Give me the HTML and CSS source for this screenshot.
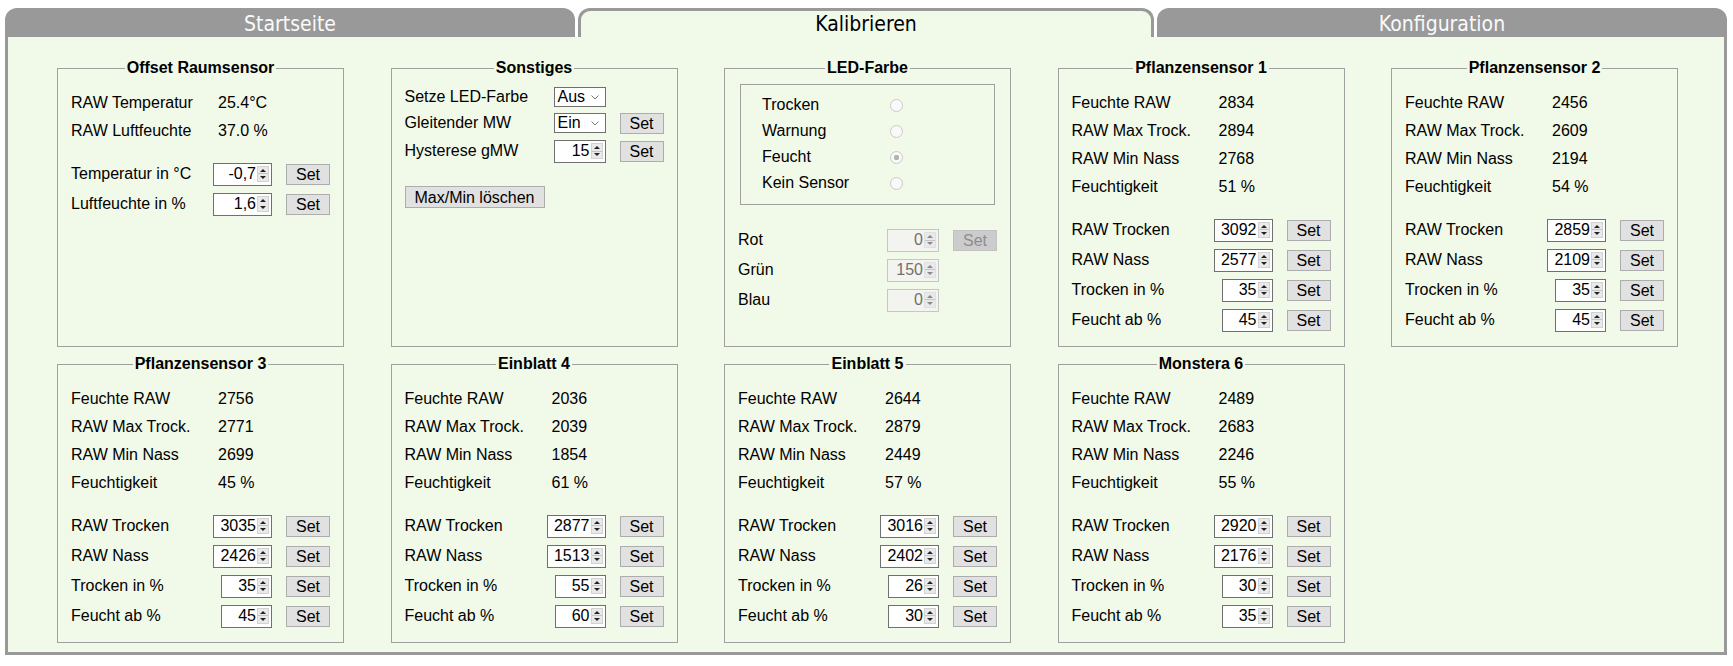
FILE: index.html
```html
<!DOCTYPE html>
<html lang="de">
<head>
<meta charset="utf-8">
<title>Kalibrieren</title>
<link rel="stylesheet" href="styles.css">
</head>
<body>
<div class="app">
  <nav class="tabs">
    <a class="tab" href="#">Startseite</a>
    <a class="tab active" href="#">Kalibrieren</a>
    <a class="tab" href="#">Konfiguration</a>
  </nav>
  <main class="panel">
    <div class="grid">

      <fieldset class="box">
        <legend>Offset Raumsensor</legend>
        <div class="form">
          <div class="row"><span>RAW Temperatur</span><span class="val">25.4°C</span></div>
          <div class="row"><span>RAW Luftfeuchte</span><span class="val">37.0 %</span></div>
          <div class="row ctl sp"><span>Temperatur in °C</span><span class="num w59">-0,7<i class="spin"></i></span><button class="btn">Set</button></div>
          <div class="row ctl"><span>Luftfeuchte in %</span><span class="num w59">1,6<i class="spin"></i></span><button class="btn">Set</button></div>
        </div>
      </fieldset>

      <fieldset class="box">
        <legend>Sonstiges</legend>
        <div class="form so">
          <div class="row s26"><span>Setze LED-Farbe</span><span class="sel">Aus<svg viewBox="0 0 8 5"><path d="M0.5 0.5L4 4L7.5 0.5" fill="none" stroke="#7a7a7a"/></svg></span></div>
          <div class="row s26"><span>Gleitender MW</span><span class="sel">Ein<svg viewBox="0 0 8 5"><path d="M0.5 0.5L4 4L7.5 0.5" fill="none" stroke="#7a7a7a"/></svg></span><button class="btn">Set</button></div>
          <div class="row ctl"><span>Hysterese gMW</span><span class="num w52">15<i class="spin"></i></span><button class="btn">Set</button></div>
          <button class="btn wide">Max/Min löschen</button>
        </div>
      </fieldset>

      <fieldset class="box">
        <legend>LED-Farbe</legend>
        <fieldset class="led">
          <label class="rrow"><span>Trocken</span><input class="radio" type="radio" name="led" disabled></label>
          <label class="rrow"><span>Warnung</span><input class="radio" type="radio" name="led" disabled></label>
          <label class="rrow"><span>Feucht</span><input class="radio" type="radio" name="led" checked disabled></label>
          <label class="rrow"><span>Kein Sensor</span><input class="radio" type="radio" name="led" disabled></label>
        </fieldset>
        <div class="rgb">
          <div class="row ctl"><span>Rot</span><span class="num w52 off">0<i class="spin"></i></span><button class="btn" disabled>Set</button></div>
          <div class="row ctl"><span>Grün</span><span class="num w52 off">150<i class="spin"></i></span></div>
          <div class="row ctl"><span>Blau</span><span class="num w52 off">0<i class="spin"></i></span></div>
        </div>
      </fieldset>

      <fieldset class="box">
        <legend>Pflanzensensor 1</legend>
        <div class="form">
          <div class="row"><span>Feuchte RAW</span><span class="val">2834</span></div>
          <div class="row"><span>RAW Max Trock.</span><span class="val">2894</span></div>
          <div class="row"><span>RAW Min Nass</span><span class="val">2768</span></div>
          <div class="row"><span>Feuchtigkeit</span><span class="val">51 %</span></div>
          <div class="row ctl sp"><span>RAW Trocken</span><span class="num w59">3092<i class="spin"></i></span><button class="btn">Set</button></div>
          <div class="row ctl"><span>RAW Nass</span><span class="num w59">2577<i class="spin"></i></span><button class="btn">Set</button></div>
          <div class="row ctl"><span>Trocken in %</span><span class="num w51">35<i class="spin"></i></span><button class="btn">Set</button></div>
          <div class="row ctl"><span>Feucht ab %</span><span class="num w51">45<i class="spin"></i></span><button class="btn">Set</button></div>
        </div>
      </fieldset>

      <fieldset class="box">
        <legend>Pflanzensensor 2</legend>
        <div class="form">
          <div class="row"><span>Feuchte RAW</span><span class="val">2456</span></div>
          <div class="row"><span>RAW Max Trock.</span><span class="val">2609</span></div>
          <div class="row"><span>RAW Min Nass</span><span class="val">2194</span></div>
          <div class="row"><span>Feuchtigkeit</span><span class="val">54 %</span></div>
          <div class="row ctl sp"><span>RAW Trocken</span><span class="num w59">2859<i class="spin"></i></span><button class="btn">Set</button></div>
          <div class="row ctl"><span>RAW Nass</span><span class="num w59">2109<i class="spin"></i></span><button class="btn">Set</button></div>
          <div class="row ctl"><span>Trocken in %</span><span class="num w51">35<i class="spin"></i></span><button class="btn">Set</button></div>
          <div class="row ctl"><span>Feucht ab %</span><span class="num w51">45<i class="spin"></i></span><button class="btn">Set</button></div>
        </div>
      </fieldset>

      <fieldset class="box">
        <legend>Pflanzensensor 3</legend>
        <div class="form">
          <div class="row"><span>Feuchte RAW</span><span class="val">2756</span></div>
          <div class="row"><span>RAW Max Trock.</span><span class="val">2771</span></div>
          <div class="row"><span>RAW Min Nass</span><span class="val">2699</span></div>
          <div class="row"><span>Feuchtigkeit</span><span class="val">45 %</span></div>
          <div class="row ctl sp"><span>RAW Trocken</span><span class="num w59">3035<i class="spin"></i></span><button class="btn">Set</button></div>
          <div class="row ctl"><span>RAW Nass</span><span class="num w59">2426<i class="spin"></i></span><button class="btn">Set</button></div>
          <div class="row ctl"><span>Trocken in %</span><span class="num w51">35<i class="spin"></i></span><button class="btn">Set</button></div>
          <div class="row ctl"><span>Feucht ab %</span><span class="num w51">45<i class="spin"></i></span><button class="btn">Set</button></div>
        </div>
      </fieldset>

      <fieldset class="box">
        <legend>Einblatt 4</legend>
        <div class="form">
          <div class="row"><span>Feuchte RAW</span><span class="val">2036</span></div>
          <div class="row"><span>RAW Max Trock.</span><span class="val">2039</span></div>
          <div class="row"><span>RAW Min Nass</span><span class="val">1854</span></div>
          <div class="row"><span>Feuchtigkeit</span><span class="val">61 %</span></div>
          <div class="row ctl sp"><span>RAW Trocken</span><span class="num w59">2877<i class="spin"></i></span><button class="btn">Set</button></div>
          <div class="row ctl"><span>RAW Nass</span><span class="num w59">1513<i class="spin"></i></span><button class="btn">Set</button></div>
          <div class="row ctl"><span>Trocken in %</span><span class="num w51">55<i class="spin"></i></span><button class="btn">Set</button></div>
          <div class="row ctl"><span>Feucht ab %</span><span class="num w51">60<i class="spin"></i></span><button class="btn">Set</button></div>
        </div>
      </fieldset>

      <fieldset class="box">
        <legend>Einblatt 5</legend>
        <div class="form">
          <div class="row"><span>Feuchte RAW</span><span class="val">2644</span></div>
          <div class="row"><span>RAW Max Trock.</span><span class="val">2879</span></div>
          <div class="row"><span>RAW Min Nass</span><span class="val">2449</span></div>
          <div class="row"><span>Feuchtigkeit</span><span class="val">57 %</span></div>
          <div class="row ctl sp"><span>RAW Trocken</span><span class="num w59">3016<i class="spin"></i></span><button class="btn">Set</button></div>
          <div class="row ctl"><span>RAW Nass</span><span class="num w59">2402<i class="spin"></i></span><button class="btn">Set</button></div>
          <div class="row ctl"><span>Trocken in %</span><span class="num w51">26<i class="spin"></i></span><button class="btn">Set</button></div>
          <div class="row ctl"><span>Feucht ab %</span><span class="num w51">30<i class="spin"></i></span><button class="btn">Set</button></div>
        </div>
      </fieldset>

      <fieldset class="box">
        <legend>Monstera 6</legend>
        <div class="form">
          <div class="row"><span>Feuchte RAW</span><span class="val">2489</span></div>
          <div class="row"><span>RAW Max Trock.</span><span class="val">2683</span></div>
          <div class="row"><span>RAW Min Nass</span><span class="val">2246</span></div>
          <div class="row"><span>Feuchtigkeit</span><span class="val">55 %</span></div>
          <div class="row ctl sp"><span>RAW Trocken</span><span class="num w59">2920<i class="spin"></i></span><button class="btn">Set</button></div>
          <div class="row ctl"><span>RAW Nass</span><span class="num w59">2176<i class="spin"></i></span><button class="btn">Set</button></div>
          <div class="row ctl"><span>Trocken in %</span><span class="num w51">30<i class="spin"></i></span><button class="btn">Set</button></div>
          <div class="row ctl"><span>Feucht ab %</span><span class="num w51">35<i class="spin"></i></span><button class="btn">Set</button></div>
        </div>
      </fieldset>

    </div>
  </main>
</div>
</body>
</html>
```

FILE: styles.css
```css
* { box-sizing: border-box; }

body {
  margin: 0;
  background: #fff;
  font-family: "Liberation Sans", Arial, sans-serif;
  font-size: 16px;
  color: #000;
}

.app { margin: 8px 6px 0 5px; }

/* tabs */
.tabs { display: flex; gap: 3px; height: 29px; }
.tab {
  flex: 1;
  height: 29px;
  padding-top: 3px;
  background: #999;
  color: #fafafa;
  border-radius: 12px 12px 0 0;
  text-align: center;
  text-decoration: none;
  font-family: "DejaVu Sans Condensed", "DejaVu Sans", sans-serif;
  font-size: 21px;
  line-height: 26px;
}
.tab.active {
  background: #f1f9e8;
  color: #000;
  border: 3px solid #999;
  border-bottom: 0;
  padding-top: 1px;
  line-height: 24px;
}

/* panel */
.panel {
  height: 618px;
  border: 3px solid #999;
  border-top: 0;
  background: #f1f9e8;
  padding: 22px 0 0 49px;
}
.grid {
  display: grid;
  grid-template-columns: repeat(5, 287px);
  grid-template-rows: 288px 288px;
  column-gap: 46.5px;
  row-gap: 8px;
}

.box {
  margin: 0;
  padding: 0 13px;
  border: 1px solid #a0a0a0;
  min-width: 0;
}
.box > legend {
  margin: 0 auto;
  padding: 0 2px;
  font-weight: bold;
  font-size: 16px;
  line-height: 18px;
}

.form { padding-top: 12px; }
.form.so { padding-top: 7px; }

.row {
  display: grid;
  grid-template-columns: 128px 59px 44px;
  column-gap: 14px;
  align-items: center;
  height: 28px;
  white-space: nowrap;
}
.row.ctl { height: 30px; }
.row.s26 { height: 26px; }
.sp { margin-top: 14px; }
.val { padding-left: 5px; }

/* number field */
.num {
  justify-self: end;
  display: flex;
  align-items: center;
  justify-content: flex-end;
  height: 23px;
  border: 1px solid #707070;
  background: #fff;
  padding: 0 2px;
}
.w59 { width: 59px; }
.w52 { width: 52px; }
.w51 { width: 51px; }
.spin {
  display: flex;
  flex-direction: column;
  justify-content: space-around;
  align-items: center;
  width: 12px;
  height: 16px;
  margin-left: 1px;
  border: 1px solid #d2d2d2;
  background: linear-gradient(#e9e9e9 0 6.5px, #c4c4c4 6.5px 7.5px, #e9e9e9 7.5px);
}
.spin::before,
.spin::after {
  content: "";
  border-left: 3px solid transparent;
  border-right: 3px solid transparent;
}
.spin::before { border-bottom: 3px solid #222; }
.spin::after { border-top: 3px solid #222; }

.num.off { border-color: #c6c6c6; background: #f3f4ef; color: #707070; }
.num.off .spin { border-color: #e0e0e0; }
.num.off .spin::before { border-bottom-color: #8a8a8a; }
.num.off .spin::after { border-top-color: #8a8a8a; }

/* select */
.sel {
  justify-self: end;
  width: 52px;
  height: 20px;
  display: flex;
  align-items: center;
  justify-content: space-between;
  border: 1px solid #707070;
  background: #fff;
  padding: 0 6px 0 3px;
}
.sel svg { width: 8px; height: 5px; }

/* buttons */
.btn {
  width: 44px;
  height: 21px;
  padding: 0;
  margin: 0;
  border: 1px solid #adadad;
  background: #e1e1e1;
  color: #000;
  font: inherit;
  line-height: 19px;
}
.btn:disabled { background: #cccccc; color: #8e8e8e; border-color: #c2c2c2; }
.btn.wide { width: 140px; height: 22px; margin-top: 20px; }

/* LED colour */
.led {
  margin: 7px 2px 0;
  padding: 7px 0 8px 21px;
  border: 1px solid #a0a0a0;
  height: 121px;
  min-width: 0;
}
.rrow {
  display: grid;
  grid-template-columns: 128px 13px;
  align-items: center;
  height: 26px;
}
.radio {
  -webkit-appearance: none;
  appearance: none;
  width: 13px;
  height: 13px;
  margin: 0;
  border: 1px solid #cacaca;
  border-radius: 50%;
  background: #f9f9f9;
}
.radio:checked { background: radial-gradient(circle, #b3b3b3 0 2.5px, #f9f9f9 3px); }
.rgb { margin-top: 20px; }
```
